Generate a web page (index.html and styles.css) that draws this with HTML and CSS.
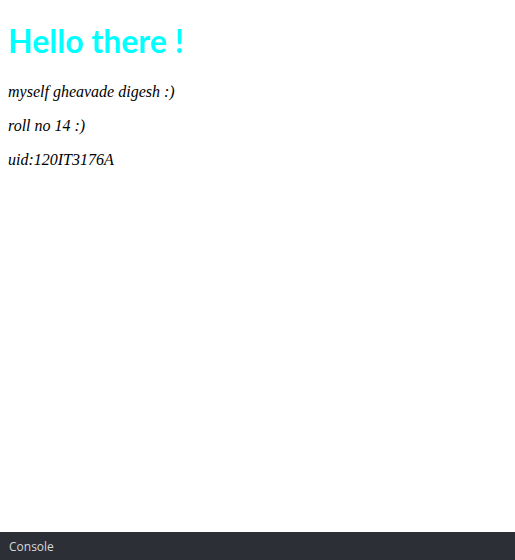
FILE: index.html
```html
<!DOCTYPE html>
<html>
<head>
<meta charset="utf-8">
<link rel="stylesheet" href="styles.css">
</head>
<body>
<h1 class="title">Hello there !</h1>
<p class="line">myself gheavade digesh :)</p>
<p class="line">roll no 14 :)</p>
<p class="line">uid:120IT3176A</p>
<div class="console">Console</div>
</body>
</html>
```
FILE: styles.css
```css
html, body {
  background: #ffffff;
}
body {
  margin: 8px;
}
.title {
  font-family: "Lato", "Open Sans", sans-serif;
  font-size: 32px;
  font-weight: 700;
  color: #00ffff;
  margin: 12.5px 0 23.44px;
}
.line {
  font-family: "Liberation Serif", serif;
  font-style: italic;
  font-size: 16px;
  color: #000;
  margin: 16px 0;
}
.console {
  position: fixed;
  left: 0;
  right: 0;
  bottom: 0;
  height: 28px;
  background: #2c2f36;
  color: #d6d8dc;
  font-family: "Open Sans", sans-serif;
  font-size: 12px;
  display: flex;
  align-items: center;
  padding-left: 9px;
  box-sizing: border-box;
}
```
